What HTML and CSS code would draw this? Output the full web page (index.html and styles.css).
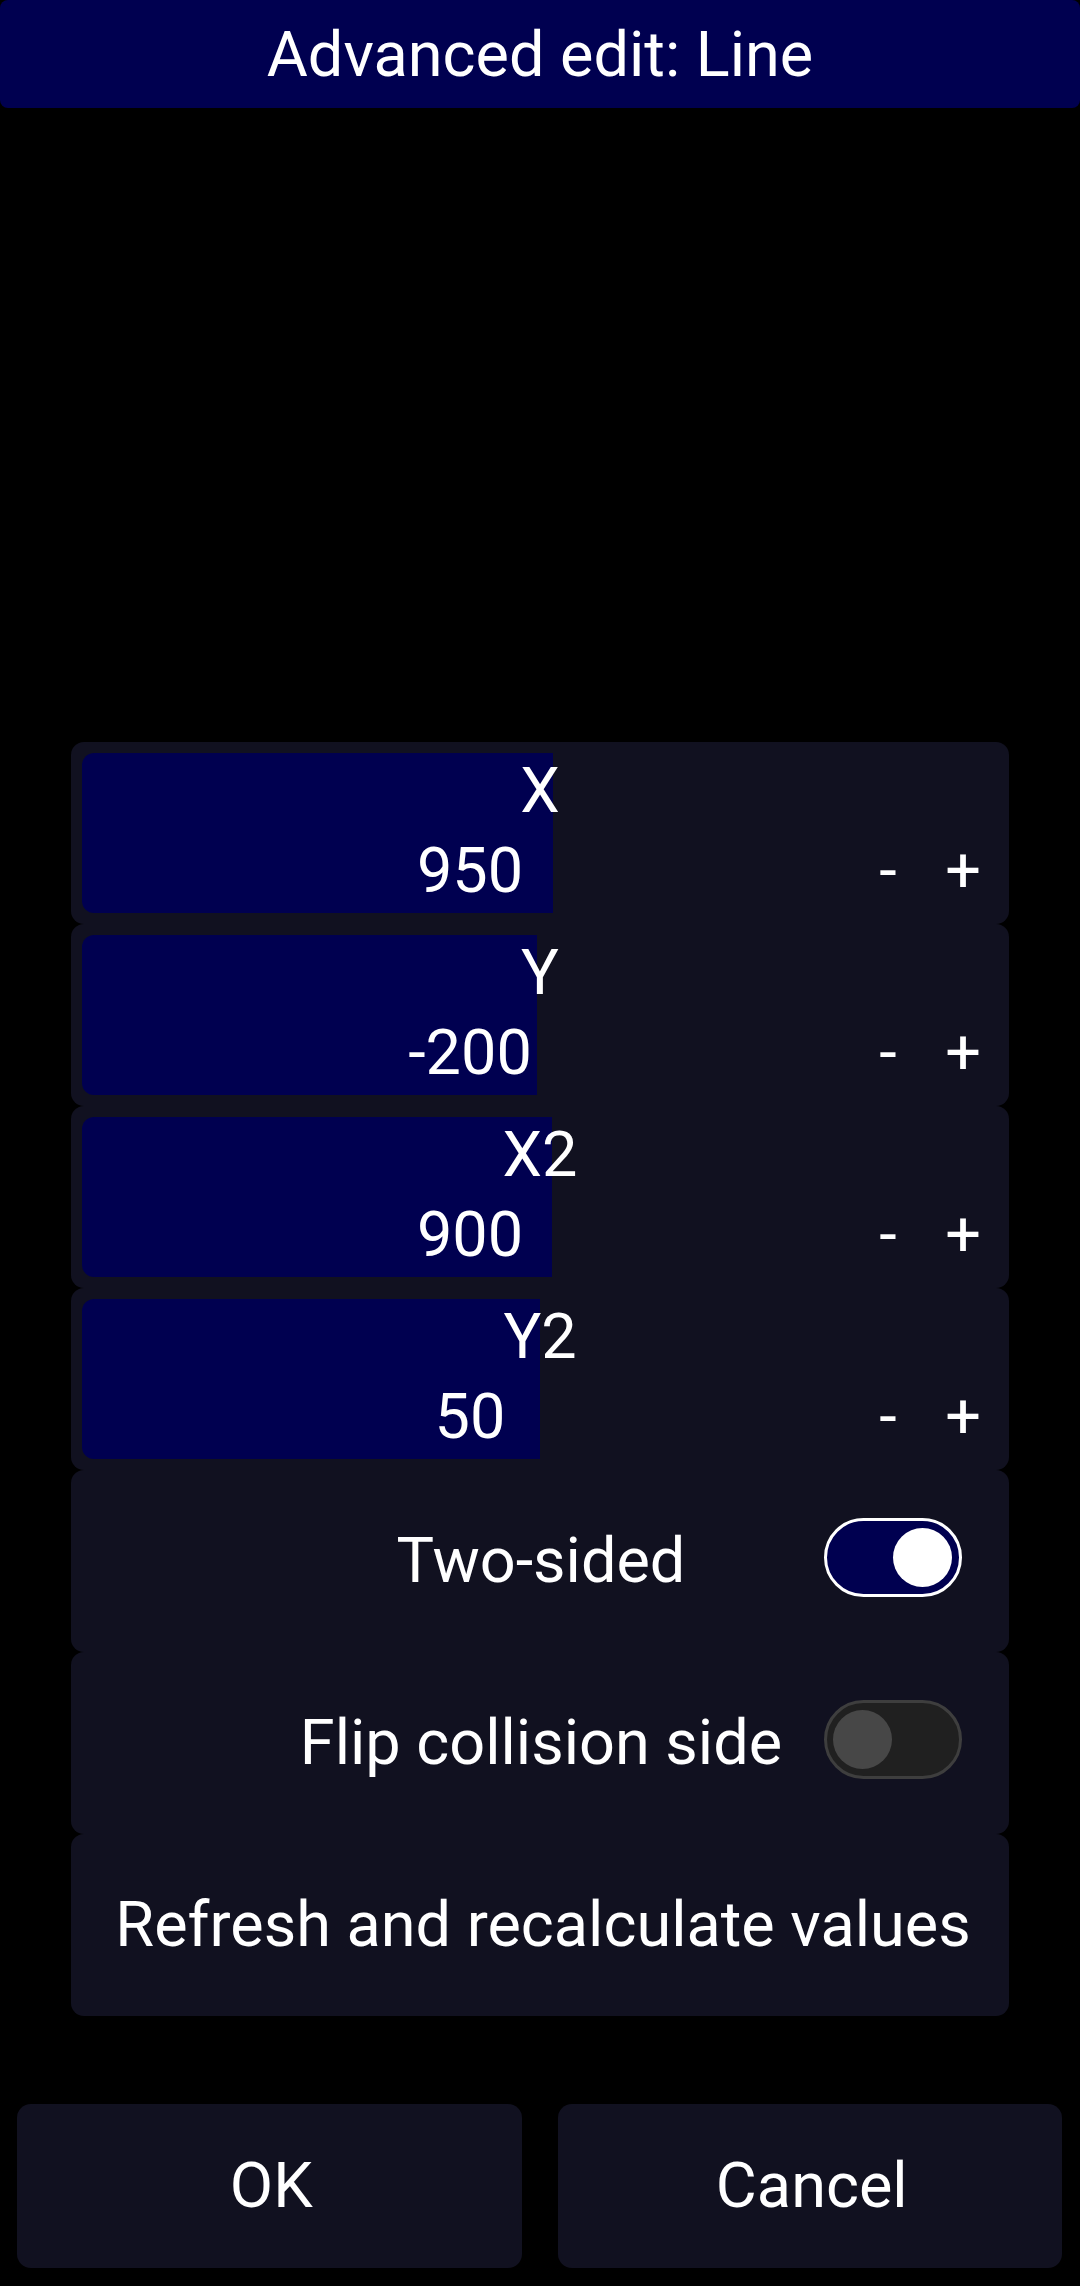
FILE: index.html
```html
<!DOCTYPE html>
<html>
<head>
<meta charset="utf-8">
<link rel="stylesheet" href="styles.css">
</head>
<body>
<div class="screen">
  <header class="title">Advanced edit: Line</header>
  <div class="spacer"></div>
  <section class="panel">
    <div class="row slider">
      <div class="fill" style="width:471px"></div>
      <div class="label">X</div>
      <div class="valrow"><span class="value">950</span><span class="btn minus">-</span><span class="btn plus">+</span></div>
    </div>
    <div class="row slider">
      <div class="fill" style="width:455px"></div>
      <div class="label">Y</div>
      <div class="valrow"><span class="value">-200</span><span class="btn minus">-</span><span class="btn plus">+</span></div>
    </div>
    <div class="row slider">
      <div class="fill" style="width:470px"></div>
      <div class="label">X2</div>
      <div class="valrow"><span class="value">900</span><span class="btn minus">-</span><span class="btn plus">+</span></div>
    </div>
    <div class="row slider">
      <div class="fill" style="width:458px"></div>
      <div class="label">Y2</div>
      <div class="valrow"><span class="value">50</span><span class="btn minus">-</span><span class="btn plus">+</span></div>
    </div>
    <div class="row switchrow">
      <span class="swlabel">Two-sided</span>
      <span class="toggle on"><span class="thumb"></span></span>
    </div>
    <div class="row switchrow">
      <span class="swlabel">Flip collision side</span>
      <span class="toggle off"><span class="thumb"></span></span>
    </div>
    <div class="row action">Refresh and recalculate values</div>
  </section>
  <div class="gap"></div>
  <footer class="buttons">
    <div class="bigbtn">OK</div>
    <div class="bigbtn">Cancel</div>
  </footer>
</div>
</body>
</html>
```
FILE: styles.css
```css
html, body {
  margin: 0;
  padding: 0;
  background: #000000;
}
body {
  width: 1080px;
  height: 2286px;
  overflow: hidden;
  font-family: Roboto, "Noto Sans", "Liberation Sans", sans-serif;
  font-size: 63px;
  color: #ffffff;
}
.screen {
  display: flex;
  flex-direction: column;
  height: 2286px;
}
.title {
  height: 108px;
  background: #000050;
  border-radius: 8px;
  display: flex;
  align-items: center;
  justify-content: center;
  font-size: 63px;
  line-height: 75px;
  box-sizing: border-box;
}
.spacer {
  height: 634px;
}
.panel {
  margin: 0 71px;
  display: flex;
  flex-direction: column;
}
.row {
  position: relative;
  height: 182px;
  box-sizing: border-box;
  background: #111120;
  border-radius: 13px;
}
.slider {
  padding: 12px 11px 0 11px;
}
.fill {
  position: absolute;
  left: 11px;
  top: 11px;
  bottom: 11px;
  background: #000050;
  border-radius: 12px 0 0 12px;
}
.label {
  position: relative;
  text-align: center;
  line-height: 74px;
  height: 74px;
}
.valrow {
  position: relative;
  display: flex;
  margin-top: 6px;
  line-height: 74px;
  height: 74px;
}
.value {
  flex: 1;
  text-align: center;
}
.btn {
  text-align: center;
}
.minus {
  width: 60px;
}
.plus {
  width: 70px;
  margin-left: 10px;
}
.switchrow {
  display: grid;
  grid-template-columns: 1fr auto 1fr;
  align-items: center;
  padding: 0 47px 0 49px;
}
.swlabel {
  grid-column: 2;
  line-height: 74px;
  white-space: nowrap;
}
.toggle {
  grid-column: 3;
  justify-self: end;
  width: 138px;
  height: 79px;
  box-sizing: border-box;
  border-radius: 40px;
  border: 3px solid #ffffff;
  display: flex;
  align-items: center;
  padding: 0 6px;
  margin-bottom: 7px;
}
.toggle .thumb {
  width: 59px;
  height: 59px;
  border-radius: 50%;
}
.toggle.on {
  background: #000050;
  border-color: #ffffff;
  justify-content: flex-end;
  padding-right: 7px;
}
.toggle.on .thumb {
  background: #ffffff;
}
.toggle.off {
  background: #202020;
  border-color: #3e3e3e;
  justify-content: flex-start;
}
.toggle.off .thumb {
  background: #474747;
}
.action {
  display: flex;
  align-items: center;
  justify-content: center;
  padding-left: 6px;
  line-height: 74px;
}
.gap {
  height: 88px;
}
.buttons {
  display: flex;
  gap: 36px;
  padding: 0 18px 0 17px;
}
.bigbtn {
  flex: 1;
  height: 164px;
  background: #111120;
  border-radius: 14px;
  display: flex;
  align-items: center;
  justify-content: center;
  padding-left: 4px;
  line-height: 74px;
}
```
